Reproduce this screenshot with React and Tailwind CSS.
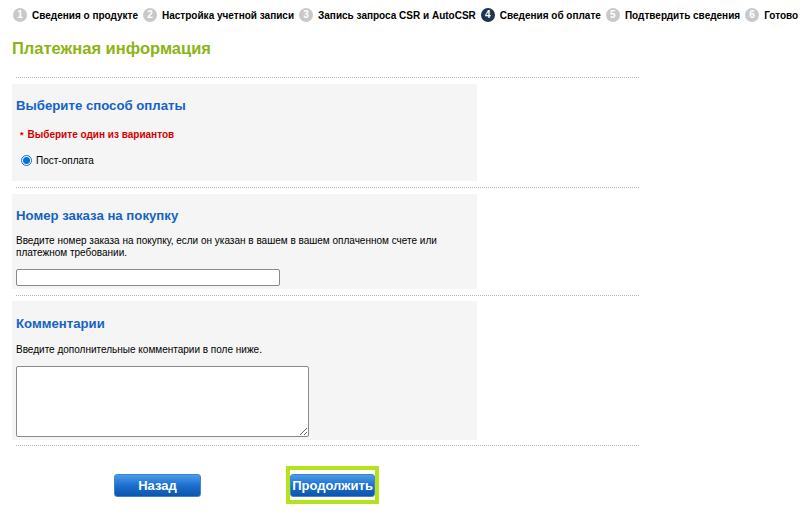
import React from "react";

const steps = [
  "Сведения о продукте",
  "Настройка учетной записи",
  "Запись запроса CSR и AutoCSR",
  "Сведения об оплате",
  "Подтвердить сведения",
  "Готово",
];

function Dotted() {
  return <div className="ml-[4px] w-[623px] border-t border-dotted border-[#b4b4b4] h-0" />;
}

export default function App() {
  return (
    <div className="w-[802px] h-[519px] bg-white text-black font-['Liberation_Sans',Arial,sans-serif] overflow-hidden">
      {/* steps */}
      <div className="h-[30px] flex items-center pl-[13px] gap-[5px] text-[10px] font-bold whitespace-nowrap">
        {steps.map((s, i) => (
          <React.Fragment key={i}>
            <span
              className={
                "shrink-0 w-[14px] h-[14px] rounded-full flex items-center justify-center text-[10px] font-bold text-white leading-none " +
                (i === 3 ? "bg-[#1c3550]" : "bg-[#c9c9c9]")
              }
            >
              {i + 1}
            </span>
            <span className="shrink-0">{s}</span>
          </React.Fragment>
        ))}
      </div>

      <div className="pl-[12px]">
        <h1 className="mt-[8px] h-[20px] leading-[20px] text-[16.5px] font-bold text-[#8cb414]">
          Платежная информация
        </h1>

        <div className="mt-[19px]">
          <Dotted />
        </div>

        {/* Panel 1 */}
        <div className="mt-[6px] w-[465px] h-[97px] bg-[#f5f5f5] pl-[4px] pt-[14px]">
          <h2 className="h-[16px] leading-[16px] text-[13.2px] font-bold text-[#1564c4]">
            Выберите способ оплаты
          </h2>
          <div className="mt-[14px] h-[14px] leading-[14px] text-[10px] font-bold text-[#d50000] pl-[4px] flex items-center">
            <span className="text-[9px] mr-[4px]">*</span>
            <span>Выберите один из вариантов</span>
          </div>
          <label className="mt-[11px] h-[14px] flex items-center text-[10px] pl-[5px]">
            <span className="w-[11px] h-[11px] rounded-full border border-[#0a6fd6] bg-white flex items-center justify-center">
              <span className="w-[7px] h-[7px] rounded-full bg-[#0a6fd6]" />
            </span>
            <span className="ml-[4px]">Пост-оплата</span>
          </label>
        </div>

        <div className="mt-[6px]">
          <Dotted />
        </div>

        {/* Panel 2 */}
        <div className="mt-[6px] w-[465px] h-[95px] bg-[#f5f5f5] pl-[4px] pt-[14px]">
          <h2 className="h-[16px] leading-[16px] text-[13.2px] font-bold text-[#1564c4]">
            Номер заказа на покупку
          </h2>
          <p className="mt-[11px] text-[10px] leading-[12px] w-[440px]">
            Введите номер заказа на покупку, если он указан в вашем в вашем оплаченном счете или платежном требовании.
          </p>
          <input
            type="text"
            className="mt-[10px] block w-[264px] h-[17px] bg-white border border-[#8a8a8a] rounded-[2px] outline-none"
          />
        </div>

        <div className="mt-[6px]">
          <Dotted />
        </div>

        {/* Panel 3 */}
        <div className="mt-[5px] w-[465px] h-[139px] bg-[#f5f5f5] pl-[4px] pt-[15px]">
          <h2 className="h-[16px] leading-[16px] text-[13.2px] font-bold text-[#1564c4]">
            Комментарии
          </h2>
          <p className="mt-[12px] text-[10px] leading-[12px]">
            Введите дополнительные комментарии в поле ниже.
          </p>
          <textarea className="mt-[10px] block w-[293px] h-[71px] bg-white border border-[#8a8a8a] rounded-[2px] outline-none resize" />
        </div>

        <div className="mt-[5px]">
          <Dotted />
        </div>

        {/* Buttons */}
        <div className="mt-[20px] flex items-start">
          <button className="mt-[8px] ml-[102px] w-[87px] h-[23px] rounded-[3px] bg-gradient-to-b from-[#4a9cea] via-[#1a6fcf] to-[#0b55ad] border border-[#3f86d0] text-white text-[13px] font-bold">
            Назад
          </button>
          <div className="ml-[85px] border-[4px] border-[#b4e31c] pt-[4px] pb-[3px] bg-white">
            <button className="block w-[85px] h-[23px] rounded-[3px] bg-gradient-to-b from-[#4a9cea] via-[#1a6fcf] to-[#0b55ad] border border-[#3f86d0] text-white text-[13px] font-bold whitespace-nowrap">
              Продолжить
            </button>
          </div>
        </div>
      </div>
    </div>
  );
}
